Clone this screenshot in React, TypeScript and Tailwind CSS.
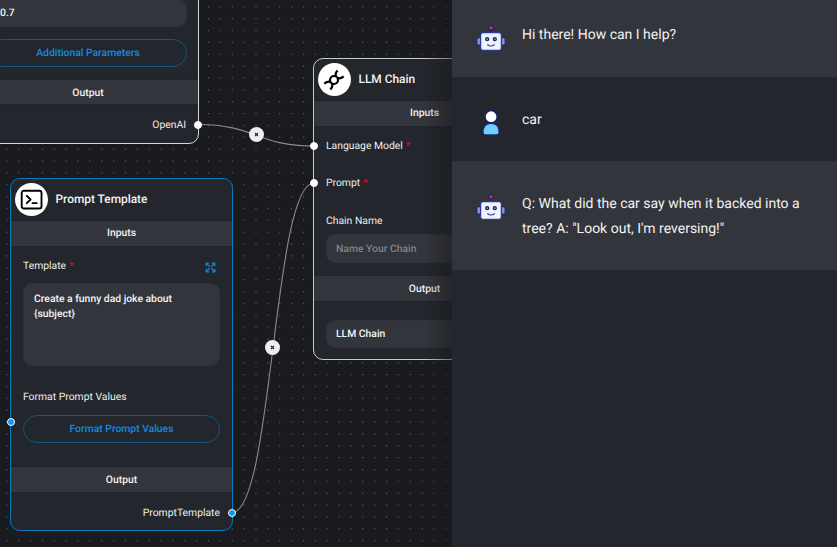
import type { ReactNode } from "react";

function Band({ children, className = "" }: { children: ReactNode; className?: string }) {
  return (
    <div
      className={`flex shrink-0 items-center justify-center border-y border-[#202329] bg-[#32353b] text-[10.36px] font-medium text-[#f2f2f3] ${className}`}
    >
      {children}
    </div>
  );
}

function Title({ icon, children }: { icon: ReactNode; children: ReactNode }) {
  return (
    <div className="flex h-[41px] shrink-0 items-center gap-[8px] pl-[3.5px]">
      <div className="flex size-[33px] items-center justify-center rounded-full bg-white text-black">{icon}</div>
      <span className="pt-px text-[11.9px] font-medium text-[#f2f2f3]">{children}</span>
    </div>
  );
}

function Handle({ className, blue }: { className: string; blue?: boolean }) {
  return (
    <span
      className={`absolute size-[8px] rounded-full border border-white ${blue ? "bg-[#0a97f5]" : "bg-white"} ${className}`}
    />
  );
}

function Star() {
  return <span className="ml-[3px] text-[#f00026]">*</span>;
}

function EdgeButton({ className }: { className: string }) {
  return (
    <div className={`absolute flex size-[15px] items-center justify-center rounded-full bg-[#eeeeee] ${className}`}>
      <svg viewBox="0 0 15 15" className="size-[15px]" stroke="#222" strokeWidth="1.1">
        <path d="M6 6l3 3M9 6l-3 3" />
      </svg>
    </div>
  );
}

function TerminalIcon() {
  return (
    <svg viewBox="0 0 24 24" className="size-[25px]" fill="none" stroke="currentColor" strokeWidth="1.8" strokeLinecap="round" strokeLinejoin="round">
      <rect x="2.6" y="3.6" width="19" height="17" rx="2" />
      <path d="M7.500 8.500l3.600 3.500-3.600 3.500M13 15.500h4" />
    </svg>
  );
}

function ChainIcon() {
  return (
    <svg viewBox="0 0 24 24" className="size-[24px]" fill="none" stroke="currentColor" strokeWidth="2.200" strokeLinecap="butt" strokeLinejoin="round">
      <circle cx="12" cy="12" r="4" />
      <path d="M14.300 8.700c-1.500-2.100-.3-4.300 1.300-6.100M15.500 9.800c2.100 1.300 4 .2 6.200-1.300M9.700 15.300c1.500 2.100.3 4.300-1.300 6.100M8.500 14.200c-2.100-1.300-4-.2-6.200 1.300" />
    </svg>
  );
}

function ExpandIcon() {
  return (
    <svg viewBox="0 0 24 24" className="size-[13px]" fill="none" stroke="#0d86d6" strokeWidth="2.400" strokeLinecap="round" strokeLinejoin="round">
      <path d="M15.500 4H20v4.500M14 10l6-6M8.500 20H4v-4.500M4 20l6-6M15.500 20H20v-4.500M14 14l6 6M8.500 4H4v4.500M4 4l6 6" />
    </svg>
  );
}

function Robot() {
  return (
    <svg viewBox="0 0 30 28" className="h-[28px] w-[30px]" fill="none">
      <path d="M15 5v4" stroke="#232370" strokeWidth="1.400" />
      <circle cx="15" cy="3.700" r="2.100" fill="#f0285f" stroke="#232370" strokeWidth="1.200" />
      <rect x="0.800" y="13.700" width="4.500" height="7.500" rx="1.700" fill="#8298d8" stroke="#232370" strokeWidth="1.200" />
      <rect x="24.700" y="13.700" width="4.500" height="7.500" rx="1.700" fill="#8298d8" stroke="#232370" strokeWidth="1.200" />
      <rect x="4.600" y="8.700" width="20.800" height="17.600" rx="2.200" fill="#eff3ff" stroke="#293b94" strokeWidth="1.300" />
      <circle cx="11.200" cy="15.200" r="1.500" fill="#8e9ace" stroke="#1c2260" strokeWidth="1.300" />
      <circle cx="18.800" cy="15.200" r="1.500" fill="#8e9ace" stroke="#1c2260" strokeWidth="1.300" />
      <path d="M11.700 20.800c1.800 1.500 4.800 1.500 6.600 0" stroke="#37447f" strokeWidth="1.300" strokeLinecap="round" />
    </svg>
  );
}

function Person() {
  return (
    <svg viewBox="0 0 30 28" className="h-[28px] w-[30px]" stroke="#20207c" strokeWidth="1.300">
      <path d="M7 22.900c0-5.500 3-8.600 8.100-8.600s8.100 3.100 8.100 8.600c0 2-.9 3-2.600 3h-11C7.900 25.900 7 24.900 7 22.900z" fill="#6fd0f8" />
      <circle cx="15.100" cy="7.700" r="6" fill="#fff" />
    </svg>
  );
}

function Message({ icon, children, className }: { icon: ReactNode; children: ReactNode; className: string }) {
  return (
    <div className={`flex shrink-0 gap-[16px] pl-[24px] ${className}`}>
      <div className="mt-px shrink-0">{icon}</div>
      <p className="w-[300px] text-[14px] leading-[25px] text-[#f2f2f3]">{children}</p>
    </div>
  );
}

const outlineButton =
  "flex shrink-0 items-center justify-center rounded-full border border-[#11577f] text-[10.36px] font-medium text-[#0d8ee3]";
const field = "shrink-0 rounded-[9px] border border-[#2e3137] bg-[#32353b] text-[10.36px] font-medium text-[#f5f5f5]";

export default function App() {
  return (
    <div className="flex h-[547px] w-[837px] overflow-hidden bg-[#1a1b1f] font-['Roboto',sans-serif] [text-rendering:geometricPrecision]">
      <main className="relative h-full w-[452px] shrink-0 overflow-hidden text-[10.36px] text-[#eeeeef]">
        <svg className="absolute inset-0" width="452" height="547" fill="none">
          <defs>
            <pattern id="dots" x="6.300" y="6.200" width="11.865" height="11.865" patternUnits="userSpaceOnUse">
              <circle cx="0.600" cy="0.600" r="0.550" fill="#808186" />
            </pattern>
          </defs>
          <rect width="452" height="547" fill="url(#dots)" />
          <path d="M198 124.500C256 124.500 256 146 314 146" stroke="#8b8b8d" strokeWidth="1.100" />
          <path d="M232 512.500C273 512.500 273 183 314 183" stroke="#8b8b8d" strokeWidth="1.100" />
        </svg>

        <section className="absolute -left-[23px] -top-[200px] flex h-[344px] w-[222px] flex-col rounded-[10px] border border-[#d8d8d9] bg-[#23262c]">
          <div className={`${field} mx-[11px] mt-[198px] flex h-[28px] items-center pl-[10px]`}>0.7</div>
          <div className={`${outlineButton} mx-[11px] mt-[12px] h-[28px]`}>Additional Parameters</div>
          <Band className="mt-[12px] h-[26px] pt-px">Output</Band>
          <div className="flex h-[38px] shrink-0 items-center justify-end pr-[12px] pt-px">OpenAI</div>
          <Handle className="-right-[4px] bottom-[14px]" />
        </section>

        <section className="absolute left-[10px] top-[178px] flex h-[353px] w-[223px] flex-col rounded-[10px] border border-[#0879bd] bg-[#23262c]">
          <Title icon={<TerminalIcon />}>Prompt Template</Title>
          <Band className="h-[27px] pb-px">Inputs</Band>
          <div className="mt-[10px] flex h-[18px] shrink-0 items-center justify-between pl-[12px] pr-[15px]">
            <span>Template<Star /></span>
            <span className="mt-[3px]"><ExpandIcon /></span>
          </div>
          <div className={`${field} mx-[12px] mt-[8px] h-[83px] px-[10px] pt-[7px] leading-[15px]`}>
            Create a funny dad joke about
            <br />
            {"{subject}"}
          </div>
          <div className="mt-[22px] h-[18px] shrink-0 pl-[12px] leading-[18px]">Format Prompt Values</div>
          <div className={`${outlineButton} mx-[12px] mt-[9px] h-[28px]`}>Format Prompt Values</div>
          <Band className="mt-[23px] h-[27px] pt-px">Output</Band>
          <div className="flex h-[37px] shrink-0 items-center justify-end pr-[12px] pt-[2px]">PromptTemplate</div>
          <Handle blue className="-left-[4px] bottom-[104px]" />
          <Handle blue className="-right-[4px] bottom-[13px]" />
        </section>

        <section className="absolute left-[313px] top-[58px] flex h-[302px] w-[223px] flex-col rounded-[10px] border border-[#c9c9ca] bg-[#23262c]">
          <Title icon={<ChainIcon />}>LLM Chain</Title>
          <Band className="h-[27px] pb-px">Inputs</Band>
          <div className="mt-[10px] h-[18px] pl-[12px] leading-[18px]">Language Model<Star /></div>
          <div className="mt-[19px] h-[18px] pl-[12px] leading-[18px]">Prompt<Star /></div>
          <div className="mt-[20px] h-[18px] pl-[12px] leading-[18px]">Chain Name</div>
          <div className={`${field} mx-[12px] mt-[4px] flex h-[29px] items-center pl-[9px] pt-px`}>
            <span className="text-[#818388]">Name Your Chain</span>
          </div>
          <Band className="mt-[12px] h-[27px]">Output</Band>
          <div className={`${field} mx-[12px] mt-[18px] flex h-[28px] items-center pl-[9px]`}>LLM Chain</div>
          <Handle className="-left-[4px] top-[83px]" />
          <Handle className="-left-[4px] top-[120px]" />
        </section>

        <EdgeButton className="left-[249px] top-[127px]" />
        <EdgeButton className="left-[265px] top-[340px]" />
        <div className="absolute inset-y-0 right-0 w-[28px] bg-linear-to-r from-transparent to-[#17181b]/50" />
      </main>

      <aside className="flex h-full w-[385px] shrink-0 flex-col bg-[#23262c]">
        <Message className="h-[77px] bg-[#32353b] pt-[23px]" icon={<Robot />}>Hi there! How can I help?</Message>
        <Message className="h-[84px] pt-[31px]" icon={<Person />}>car</Message>
        <Message className="h-[109px] bg-[#32353b] pt-[31px]" icon={<Robot />}>
          Q: What did the car say when it backed into a tree? A: &quot;Look out, I&apos;m reversing!&quot;
        </Message>
      </aside>
    </div>
  );
}
